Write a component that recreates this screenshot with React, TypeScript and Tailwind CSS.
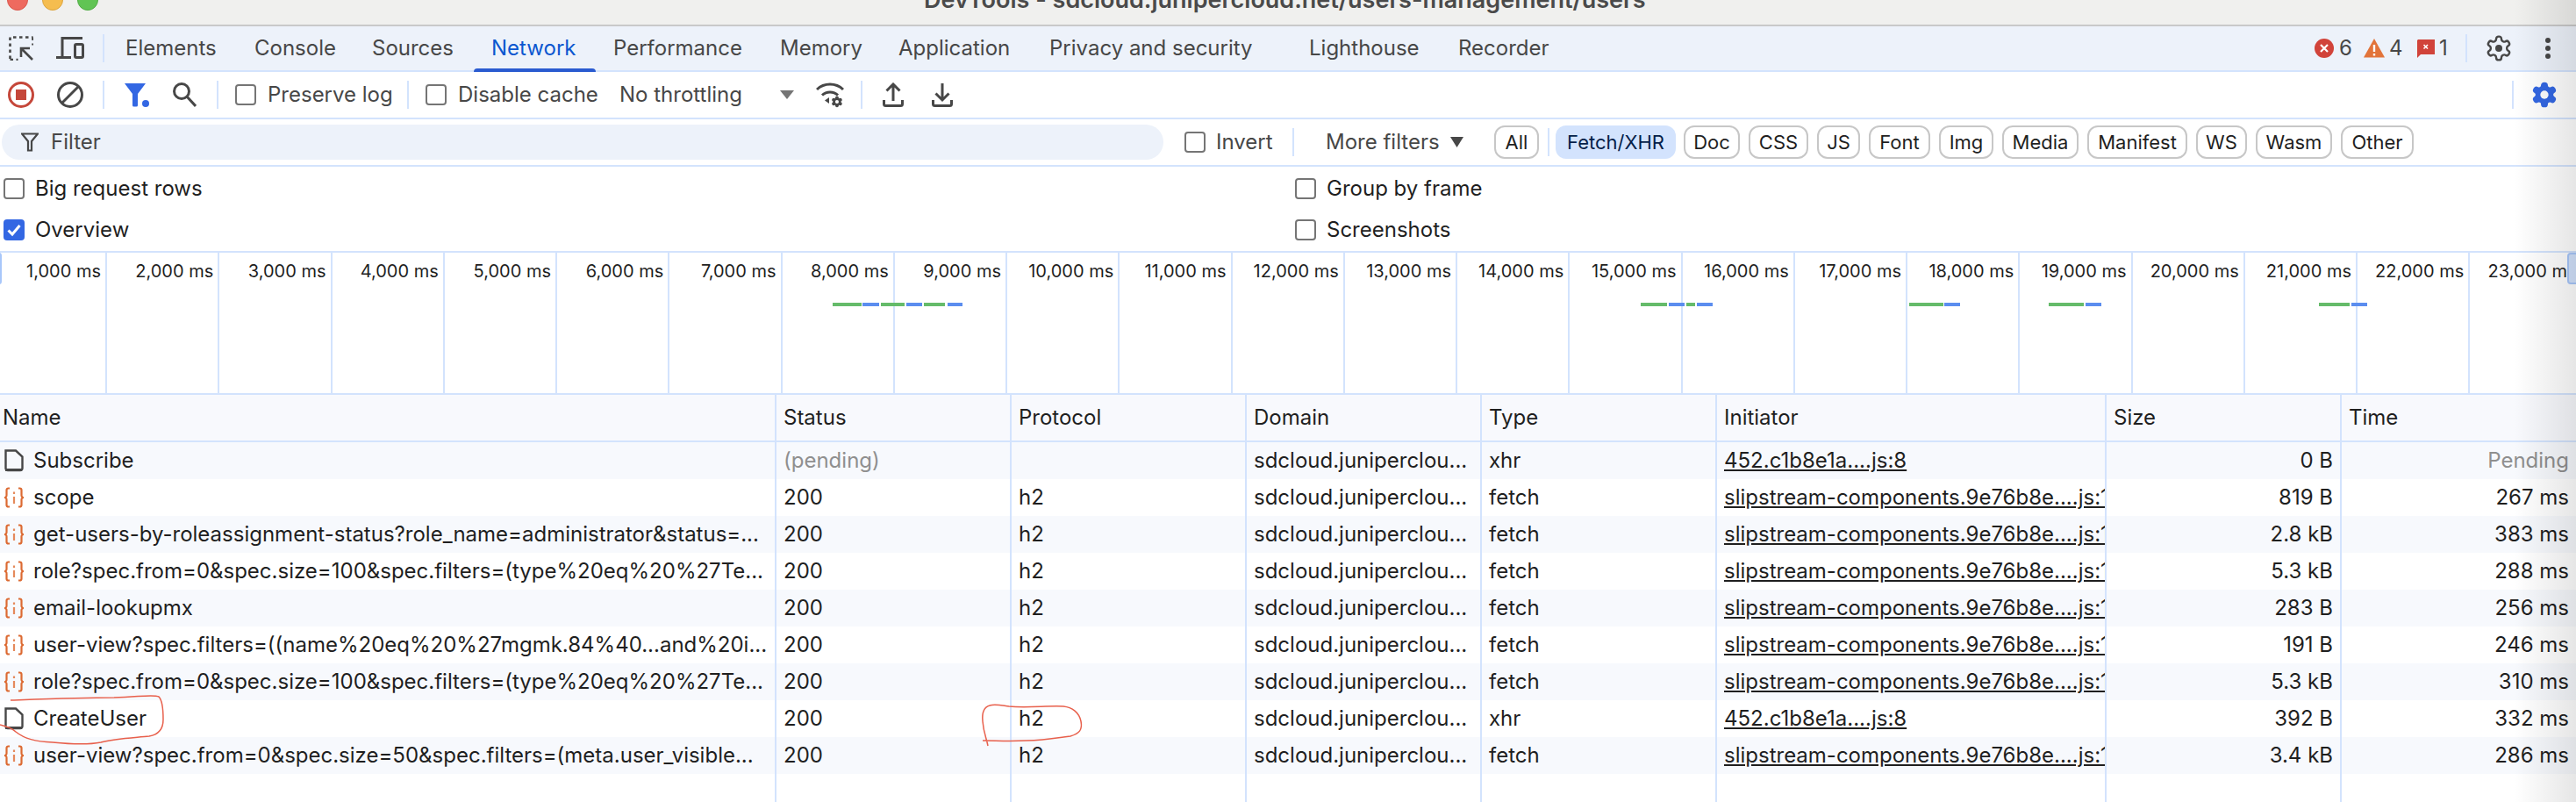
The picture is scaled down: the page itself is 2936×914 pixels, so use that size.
const tabs = [
  { label: "Elements", width: "w-[147px]" },
  { label: "Console", width: "w-[134px]" },
  { label: "Sources", width: "w-[136px]" },
  { label: "Network", width: "w-[139px]", active: true },
  { label: "Performance", width: "w-[190px]" },
  { label: "Memory", width: "w-[135px]" },
  { label: "Application", width: "w-[172px]" },
  { label: "Privacy and security", width: "w-[296px]" },
  { label: "Lighthouse", width: "w-[170px]" },
  { label: "Recorder", width: "w-[150px]" },
];

const typeFilters = [
  { label: "Doc", width: "w-[64px]" },
  { label: "CSS", width: "w-[68px]" },
  { label: "JS", width: "w-[49px]" },
  { label: "Font", width: "w-[70px]" },
  { label: "Img", width: "w-[62px]" },
  { label: "Media", width: "w-[87px]" },
  { label: "Manifest", width: "w-[114px]" },
  { label: "WS", width: "w-[58px]" },
  { label: "Wasm", width: "w-[87px]" },
  { label: "Other", width: "w-[83px]" },
];

const ticks = Array.from({ length: 23 }, (_, i) => `${i + 1},000 ms`);

const bars = [
  [949, 982, "g"], [983, 1002, "b"], [1004, 1031, "g"], [1033, 1051, "b"], [1053, 1077, "g"], [1080, 1097, "b"],
  [1870, 1900, "g"], [1902, 1920, "b"], [1922, 1932, "g"], [1934, 1952, "b"],
  [2176, 2215, "g"], [2216, 2234, "b"],
  [2335, 2375, "g"], [2377, 2395, "b"],
  [2643, 2678, "g"], [2680, 2698, "b"],
] as const;

const slip = "slipstream-components.9e76b8e....js:1234";
const lib = "452.c1b8e1a....js:8";

const rows = [
  { icon: "doc", name: "Subscribe", status: "(pending)", protocol: "", type: "xhr", init: lib, size: "0 B", time: "Pending" },
  { icon: "api", name: "scope", status: "200", protocol: "h2", type: "fetch", init: slip, size: "819 B", time: "267 ms" },
  { icon: "api", name: "get-users-by-roleassignment-status?role_name=administrator&status=...", status: "200", protocol: "h2", type: "fetch", init: slip, size: "2.8 kB", time: "383 ms" },
  { icon: "api", name: "role?spec.from=0&spec.size=100&spec.filters=(type%20eq%20%27Te...", status: "200", protocol: "h2", type: "fetch", init: slip, size: "5.3 kB", time: "288 ms" },
  { icon: "api", name: "email-lookupmx", status: "200", protocol: "h2", type: "fetch", init: slip, size: "283 B", time: "256 ms" },
  { icon: "api", name: "user-view?spec.filters=((name%20eq%20%27mgmk.84%40...and%20i...", status: "200", protocol: "h2", type: "fetch", init: slip, size: "191 B", time: "246 ms" },
  { icon: "api", name: "role?spec.from=0&spec.size=100&spec.filters=(type%20eq%20%27Te...", status: "200", protocol: "h2", type: "fetch", init: slip, size: "5.3 kB", time: "310 ms" },
  { icon: "doc", name: "CreateUser", status: "200", protocol: "h2", type: "xhr", init: lib, size: "392 B", time: "332 ms" },
  { icon: "api", name: "user-view?spec.from=0&spec.size=50&spec.filters=(meta.user_visible...", status: "200", protocol: "h2", type: "fetch", init: slip, size: "3.4 kB", time: "286 ms" },
];

const gearPath =
  "M12.22 2h-.44a2 2 0 0 0-2 2v.18a2 2 0 0 1-1 1.73l-.43.25a2 2 0 0 1-2 0l-.15-.08a2 2 0 0 0-2.73.73l-.22.38a2 2 0 0 0 .73 2.73l.15.1a2 2 0 0 1 1 1.72v.51a2 2 0 0 1-1 1.74l-.15.09a2 2 0 0 0-.73 2.73l.22.38a2 2 0 0 0 2.73.73l.15-.08a2 2 0 0 1 2 0l.43.25a2 2 0 0 1 1 1.73V20a2 2 0 0 0 2 2h.44a2 2 0 0 0 2-2v-.18a2 2 0 0 1 1-1.73l.43-.25a2 2 0 0 1 2 0l.15.08a2 2 0 0 0 2.73-.73l.22-.39a2 2 0 0 0-.73-2.73l-.15-.08a2 2 0 0 1-1-1.74v-.5a2 2 0 0 1 1-1.74l.15-.09a2 2 0 0 0 .73-2.73l-.22-.38a2 2 0 0 0-2.73-.73l-.15.08a2 2 0 0 1-2 0l-.43-.25a2 2 0 0 1-1-1.73V4a2 2 0 0 0-2-2z";

const Sep = ({ className = "" }: { className?: string }) => (
  <div className={`h-8 w-[2px] flex-none bg-[#d3e3fd] ${className}`} />
);

const Check = ({ checked = false, className = "" }: { checked?: boolean; className?: string }) =>
  checked ? (
    <svg width="24" height="24" viewBox="0 0 24 24" className={`flex-none ${className}`}>
      <rect width="24" height="24" rx="4" fill="#3367e3" />
      <path d="M5.500 12.500l4.500 4.500 8.500-10" fill="none" stroke="#fff" strokeWidth="3" />
    </svg>
  ) : (
    <div className={`size-6 flex-none rounded-[4px] border-2 border-[#757575] ${className}`} />
  );

const RowIcon = ({ kind }: { kind: string }) =>
  kind === "doc" ? (
    <svg width="24" height="26" viewBox="0 0 24 26" className="flex-none" fill="none" stroke="#474747" strokeWidth="2.400">
      <path d="M2.500 1.500h11.500l7.500 7v13a2.500 2.500 0 0 1-2.500 2.500h-14a2.500 2.500 0 0 1-2.500-2.500z" />
      <path d="M2 23.500h19" strokeWidth="3" />
    </svg>
  ) : (
    <svg width="24" height="26" viewBox="0 0 24 26" className="flex-none" fill="none" stroke="#dc6a32" strokeWidth="2.200">
      <path d="M7 2.500h-1.500a2 2 0 0 0-2 2v5.500a2.500 2.500 0 0 1-2.500 3a2.500 2.500 0 0 1 2.500 3v5.500a2 2 0 0 0 2 2h1.500" />
      <path d="M17 2.500h1.500a2 2 0 0 1 2 2v5.500a2.500 2.500 0 0 0 2.500 3a2.500 2.500 0 0 0-2.500 3v5.500a2 2 0 0 1-2 2h-1.500" />
      <path d="M12 6.500v2.500M12 12v8" stroke="#e58a5c" />
    </svg>
  );

const Cell = ({ children, className = "" }: { children?: React.ReactNode; className?: string }) => (
  <div className={`flex items-center overflow-hidden whitespace-nowrap border-r-2 border-[#d3e3fd] px-2 last:border-r-0 ${className}`}>
    {children}
  </div>
);

const gridCols = "grid grid-cols-[885px_268px_268px_268px_268px_444px_268px_267px]";

export default function App() {
  return (
    <div className="relative flex h-[914px] w-[2936px] flex-col overflow-hidden bg-white font-['Inter',sans-serif] text-[24px] leading-none text-[#1f1f1f]">
      {/* window title bar, cut off by the screenshot */}
      <div className="relative h-[30px] flex-none overflow-hidden border-b-2 border-[#c9c9c9] bg-[#f0f0ee]">
        <div className="absolute left-2 top-[-12px] size-6 rounded-full border border-[#d9574c] bg-[#ee6a5f]" />
        <div className="absolute left-12 top-[-12px] size-6 rounded-full border border-[#dca53f] bg-[#f5bd4f]" />
        <div className="absolute left-[88px] top-[-12px] size-6 rounded-full border border-[#52ac46] bg-[#61c454]" />
        <div className="absolute left-[1053px] top-[-15px] whitespace-nowrap text-[27px] font-semibold leading-[30px] text-[#4a4a4a]">
          DevTools - sdcloud.junipercloud.net/users-management/users
        </div>
      </div>

      {/* tabs */}
      <div className="flex h-[52px] flex-none items-center border-b-2 border-[#d3e3fd] bg-[#edf2fa] pl-[10px] text-[#474747]">
        <svg width="28" height="28" viewBox="0 0 28 28" className="flex-none" fill="none" stroke="#474747" strokeWidth="2.600">
          <path d="M1.500 26v-24.500h26" strokeDasharray="3.500 3.500" />
          <path d="M27.500 1.500v9M1.500 27h9" strokeDasharray="3.500 3.500" />
          <path d="M27 27l-13-13M14 24v-10h10" />
        </svg>
        <svg width="32" height="26" viewBox="0 0 32 26" className="ml-[26px] flex-none" fill="none" stroke="#474747" strokeWidth="3">
          <path d="M30 1.500h-23v21M0 23.500h17" />
          <rect x="21.500" y="8.500" width="9" height="15" rx="1.500" />
        </svg>
        <Sep className="ml-[21px]" />
        <div className="ml-1 flex h-full items-stretch">
          {tabs.map((tab) => (
            <div
              key={tab.label}
              className={`relative flex flex-none items-center pl-5 ${tab.width} ${tab.active ? "text-[#0b57d0]" : ""}`}
            >
              {tab.label}
              {tab.active && <div className="absolute inset-x-0 bottom-[-2px] h-1 rounded-t-[4px] bg-[#2a5bd0]" />}
            </div>
          ))}
        </div>
        <div className="ml-auto flex items-center pr-[29px]">
          <svg width="22" height="22" viewBox="0 0 22 22" className="flex-none">
            <circle cx="11" cy="11" r="11" fill="#d1433a" />
            <path d="M7 7l8 8M15 7l-8 8" stroke="#fff" strokeWidth="2.200" />
          </svg>
          <span className="ml-[6px] w-[14px]">6</span>
          <svg width="24" height="22" viewBox="0 0 24 22" className="ml-[14px] flex-none">
            <path d="M12 0l12 21.500h-24z" fill="#e2743a" />
            <path d="M12 7v8M12 17v2.500" stroke="#fff" strokeWidth="2.400" />
          </svg>
          <span className="ml-[5px] w-[14px]">4</span>
          <svg width="20" height="21" viewBox="0 0 20 21" className="ml-[18px] flex-none">
            <path d="M1 0h19v17h-16l-4 4v-20z" fill="#d1433a" />
            <path d="M7.500 6l4.500 4.500M12 6l-4.500 4.500" stroke="#fff" strokeWidth="1.600" />
          </svg>
          <span className="ml-[5px] w-[10px]">1</span>
          <Sep className="ml-5" />
          <svg width="32" height="32" viewBox="0 0 24 24" className="ml-5 flex-none" fill="none" stroke="#474747" strokeWidth="1.800">
            <path d={gearPath} />
            <circle cx="12" cy="12" r="3" fill="#474747" stroke="none" />
          </svg>
          <svg width="6" height="24" viewBox="0 0 6 24" className="ml-[37px] flex-none" fill="#474747">
            <circle cx="3" cy="3" r="3" />
            <circle cx="3" cy="12" r="3" />
            <circle cx="3" cy="21" r="3" />
          </svg>
        </div>
      </div>

      {/* toolbar */}
      <div className="flex h-[54px] flex-none items-center border-b-2 border-[#d3e3fd] pl-[9px] text-[#474747]">
        <svg width="30" height="30" viewBox="0 0 30 30" className="flex-none">
          <circle cx="15" cy="15" r="13.500" fill="none" stroke="#c5473a" strokeWidth="3" />
          <rect x="9" y="9" width="12" height="12" fill="#c5473a" />
        </svg>
        <svg width="30" height="30" viewBox="0 0 30 30" className="ml-[26px] flex-none" fill="none" stroke="#474747" strokeWidth="3">
          <circle cx="15" cy="15" r="13.500" />
          <path d="M25 5l-20 20" />
        </svg>
        <Sep className="ml-[22px]" />
        <svg width="32" height="30" viewBox="0 0 32 30" className="ml-[23px] flex-none" fill="#3367e3">
          <path d="M0 2h24l-9 12v13a1.500 1.500 0 0 1-1.500 1.500h-3a1.500 1.500 0 0 1-1.500-1.500v-13z" />
          <circle cx="24" cy="25" r="4" />
        </svg>
        <svg width="28" height="30" viewBox="0 0 28 30" className="ml-[22px] flex-none" fill="none" stroke="#474747" strokeWidth="3">
          <circle cx="11" cy="11" r="8.500" />
          <path d="M17 17l10 11" />
        </svg>
        <Sep className="ml-[23px]" />
        <Check className="ml-[19px]" />
        <span className="ml-[13px] w-[159px] flex-none">Preserve log</span>
        <Sep />
        <Check className="ml-[19px]" />
        <span className="ml-[13px] w-[184px] flex-none">Disable cache</span>
        <span className="w-[183px] flex-none">No throttling</span>
        <svg width="16" height="10" viewBox="0 0 16 10" className="flex-none" fill="#757575">
          <path d="M0 0h16l-8 10z" />
        </svg>
        <svg width="36" height="30" viewBox="0 0 36 30" className="ml-[25px] flex-none" fill="none" stroke="#474747" strokeWidth="3">
          <path d="M1 9a22 22 0 0 1 30 0" />
          <path d="M7 15.500a13 13 0 0 1 18 0" />
          <path d="M15 18v7l-5-3.500z" fill="#474747" stroke="none" />
          <g transform="translate(17 16) scale(.58)">
            <path d={gearPath} fill="#474747" stroke="#474747" strokeWidth="2" />
            <circle cx="12" cy="12" r="3.500" fill="#fff" stroke="none" />
          </g>
        </svg>
        <Sep className="ml-[15px]" />
        <svg width="24" height="28" viewBox="0 0 24 28" className="ml-[23px] flex-none" fill="none" stroke="#474747" strokeWidth="3">
          <path d="M12 21v-18M4.500 9.500l7.500-7.500 7.500 7.500M1.500 20v4.500a2 2 0 0 0 2 2h17a2 2 0 0 0 2-2v-4.500" />
        </svg>
        <svg width="24" height="28" viewBox="0 0 24 28" className="ml-8 flex-none" fill="none" stroke="#474747" strokeWidth="3">
          <path d="M12 1v18M4.500 12.500l7.500 7.500 7.500-7.500M1.500 20v4.500a2 2 0 0 0 2 2h17a2 2 0 0 0 2-2v-4.500" />
        </svg>
        <Sep className="ml-auto" />
        <svg width="32" height="32" viewBox="0 0 24 24" className="ml-[19px] mr-5 flex-none" fill="#3367e3" stroke="#3367e3" strokeWidth="1.500">
          <path d={gearPath} />
          <circle cx="12" cy="12" r="3.500" fill="#fff" stroke="none" />
        </svg>
      </div>

      {/* filter bar */}
      <div className="flex h-[54px] flex-none items-center border-b-2 border-[#d3e3fd] pl-[2px]">
        <div className="flex h-10 w-[1324px] flex-none items-center rounded-full bg-[#edf2fa] pl-[22px] text-[#474747]">
          <svg width="20" height="22" viewBox="0 0 20 22" fill="none" stroke="#474747" strokeWidth="2.200">
            <path d="M1 1.500h18l-7 8.500v10.500h-4v-10.500z" />
          </svg>
          <span className="ml-[14px]">Filter</span>
        </div>
        <Check className="ml-6" />
        <span className="ml-3 w-[87px] flex-none text-[#474747]">Invert</span>
        <Sep />
        <span className="ml-9 w-[142px] flex-none text-[#474747]">More filters</span>
        <svg width="15" height="12" viewBox="0 0 15 12" className="flex-none" fill="#474747">
          <path d="M0 0h15l-7.500 12z" />
        </svg>
        <div className="ml-[35px] flex h-[38px] w-[51px] flex-none items-center justify-center rounded-xl border-2 border-[#c7c7c7] text-[22px]">
          All
        </div>
        <Sep className="ml-[10px]" />
        <div className="ml-[7px] flex h-[38px] w-[137px] flex-none items-center justify-center rounded-xl bg-[#d3e3fd] text-[22px] text-[#041e49]">
          Fetch/XHR
        </div>
        <div className="ml-[9px] flex gap-[10px]">
          {typeFilters.map((f) => (
            <div
              key={f.label}
              className={`flex h-[38px] flex-none items-center justify-center rounded-xl border-2 border-[#c7c7c7] text-[22px] ${f.width}`}
            >
              {f.label}
            </div>
          ))}
        </div>
      </div>

      {/* settings */}
      <div className="grid h-[98px] flex-none grid-cols-[1472px_1fr] grid-rows-2 border-b-2 border-[#d3e3fd] pl-1 pt-[1px]">
        <label className="flex items-center gap-3">
          <Check />
          Big request rows
        </label>
        <label className="flex items-center gap-3">
          <Check />
          Group by frame
        </label>
        <label className="flex items-center gap-3">
          <Check checked />
          Overview
        </label>
        <label className="flex items-center gap-3">
          <Check />
          Screenshots
        </label>
      </div>

      {/* overview timeline */}
      <div className="relative flex h-[162px] flex-none overflow-hidden border-b-2 border-[#d3e3fd]">
        {ticks.map((tick, i) => (
          <div
            key={tick}
            className={`flex flex-none justify-end whitespace-nowrap border-r-2 border-[#d3e3fd] pr-[5px] pt-[8px] text-[20px] leading-[26px] ${
              i === 0 ? "w-[122px]" : "w-[128.25px]"
            }`}
          >
            {tick}
          </div>
        ))}
        <svg width="2936" height="160" viewBox="0 288 2936 160" className="absolute left-0 top-0">
          {bars.map(([x1, x2, kind]) => (
            <rect key={x1} x={x1} y="345" width={x2 - x1} height="4" fill={kind === "g" ? "#65bb6a" : "#5b8def"} />
          ))}
        </svg>
        <div className="absolute left-[-3px] top-0 h-9 w-[5px] rounded-r-[3px] border-2 border-[#a8c7fa] bg-white" />
        <div className="absolute right-[-4px] top-0 h-9 w-[14px] rounded-l-[4px] border-2 border-[#a8c7fa] bg-[#d3e3fd]" />
      </div>

      {/* request table */}
      <div className={`${gridCols} h-[54px] flex-none border-b-2 border-[#d3e3fd] bg-[#f8f9fd]`}>
        <Cell className="pl-[3px]">Name</Cell>
        <Cell>Status</Cell>
        <Cell>Protocol</Cell>
        <Cell>Domain</Cell>
        <Cell>Type</Cell>
        <Cell>Initiator</Cell>
        <Cell>Size</Cell>
        <Cell>Time</Cell>
      </div>
      {rows.map((row, i) => (
        <div key={i} className={`${gridCols} h-[42px] flex-none ${i % 2 === 0 ? "bg-[#f7f9fd]" : "bg-white"}`}>
          <Cell className="gap-[10px] pl-1">
            <RowIcon kind={row.icon} />
            {row.name}
          </Cell>
          <Cell className={row.status === "200" ? "" : "text-[#8f8f8f]"}>{row.status}</Cell>
          <Cell>{row.protocol}</Cell>
          <Cell>sdcloud.juniperclou...</Cell>
          <Cell>{row.type}</Cell>
          <Cell className="pr-0">
            <span className="underline underline-offset-2">{row.init}</span>
          </Cell>
          <Cell className="justify-end">{row.size}</Cell>
          <Cell className={`justify-end ${row.time === "Pending" ? "text-[#8f8f8f]" : ""}`}>{row.time}</Cell>
        </div>
      ))}
      <div className={`${gridCols} flex-1`}>
        <Cell />
        <Cell />
        <Cell />
        <Cell />
        <Cell />
        <Cell />
        <Cell />
        <Cell />
      </div>

      {/* red pen marks drawn over the screenshot */}
      <svg width="2936" height="914" viewBox="0 0 2936 914" className="pointer-events-none absolute left-0 top-0" fill="none" stroke="#e8604c" strokeWidth="1.500">
        <path d="M0 826C8 828 14 830 18 834C28 842 40 845 60 846C80 848 100 849 115 846C130 842 150 841 170 839C182 837 186 830 186 820C186 810 185 798 181 794C176 791 160 794 130 795C90 795 40 797 12 798" />
        <path d="M1126 850C1124 840 1121 835 1120 822C1119 812 1121 806 1128 804C1134 802 1142 804 1150 805C1170 807 1195 804 1212 805C1222 806 1230 812 1232 822C1234 832 1230 836 1220 839C1205 841 1190 844 1170 844C1150 845 1135 844 1120 844" />
      </svg>

      {/* window shadow along the right edge */}
      <div className="pointer-events-none absolute inset-y-0 right-0 w-[70px] bg-linear-to-r from-transparent to-black/10" />
    </div>
  );
}
